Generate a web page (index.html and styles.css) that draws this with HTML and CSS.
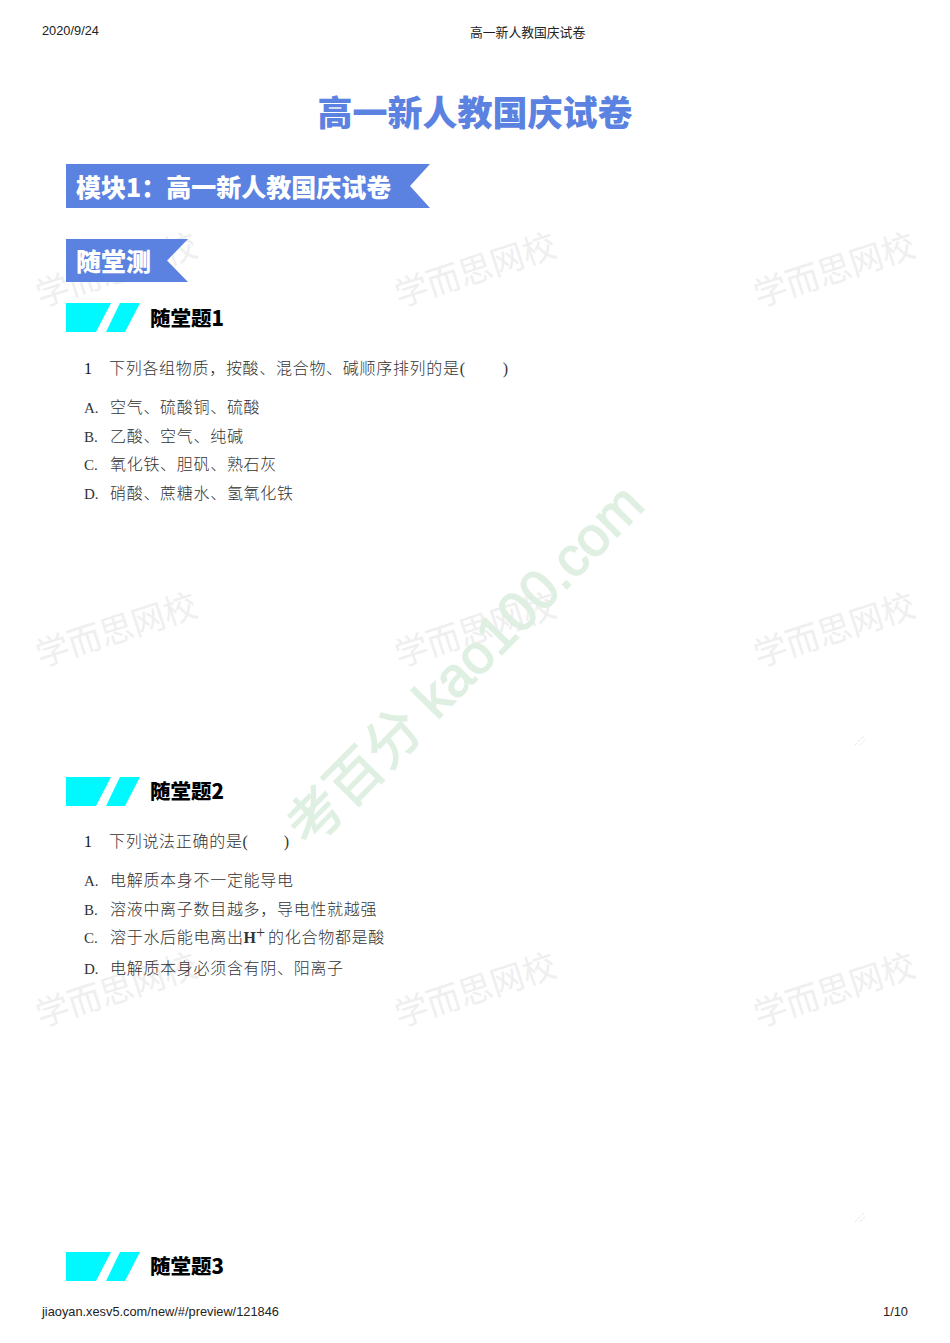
FILE: index.html
```html
<!DOCTYPE html>
<html lang="zh-CN">
<head>
<meta charset="utf-8">
<title>高一新人教国庆试卷</title>
<link rel="stylesheet" href="styles.css">
</head>
<body>
<div class="page">
  <div class="marks">
    <span>学而思网校</span><span>学而思网校</span><span>学而思网校</span>
    <span>学而思网校</span><span>学而思网校</span><span>学而思网校</span>
    <span>学而思网校</span><span>学而思网校</span><span>学而思网校</span>
  </div>
  <div class="stamp">考百分 kao100.com</div>
  <header class="top">
    <span class="date">2020/9/24</span>
    <span class="doc">高一新人教国庆试卷</span>
  </header>
  <main class="main">
    <h1 class="title">高一新人教国庆试卷</h1>
    <div class="ribbon ribbon-module">模块1&#xFF1A;高一新人教国庆试卷</div>
    <div class="ribbon ribbon-sub">随堂测</div>

    <section class="quiz">
      <h2 class="quiz-head">
        <svg class="slash" viewBox="0 0 75 29"><path d="M0 0H45L30 29H0Z"/><path d="M54 0H74L59 29H40Z"/></svg>
        随堂题1
      </h2>
      <p class="ask"><span class="n">1</span>下列各组物质&#xFF0C;按酸、混合物、碱顺序排列的是(<span class="blank"></span>)</p>
      <ol class="opts">
        <li><span class="k">A.</span>空气、硫酸铜、硫酸</li>
        <li><span class="k">B.</span>乙酸、空气、纯碱</li>
        <li><span class="k">C.</span>氧化铁、胆矾、熟石灰</li>
        <li><span class="k">D.</span>硝酸、蔗糖水、氢氧化铁</li>
      </ol>
      <svg class="grip grip-a" viewBox="0 0 10 10"><path d="M0 10L10 0M5 10L10 5"/></svg>
    </section>

    <section class="quiz">
      <h2 class="quiz-head">
        <svg class="slash" viewBox="0 0 75 29"><path d="M0 0H45L30 29H0Z"/><path d="M54 0H74L59 29H40Z"/></svg>
        随堂题2
      </h2>
      <p class="ask"><span class="n">1</span>下列说法正确的是(<span class="blank blank-b"></span>)</p>
      <ol class="opts">
        <li><span class="k">A.</span>电解质本身不一定能导电</li>
        <li><span class="k">B.</span>溶液中离子数目越多&#xFF0C;导电性就越强</li>
        <li class="tall"><span class="k">C.</span>溶于水后能电离出<b class="chem">H<sup>+</sup></b>的化合物都是酸</li>
        <li><span class="k">D.</span>电解质本身必须含有阴、阳离子</li>
      </ol>
      <svg class="grip grip-b" viewBox="0 0 10 10"><path d="M0 10L10 0M5 10L10 5"/></svg>
    </section>

    <section class="quiz">
      <h2 class="quiz-head">
        <svg class="slash" viewBox="0 0 75 29"><path d="M0 0H45L30 29H0Z"/><path d="M54 0H74L59 29H40Z"/></svg>
        随堂题3
      </h2>
    </section>
  </main>
  <footer class="bottom">
    <span>jiaoyan.xesv5.com/new/#/preview/121846</span>
    <span>1/10</span>
  </footer>
</div>
</body>
</html>
```
FILE: styles.css
```css
* { box-sizing: border-box; }
html, body { margin: 0; padding: 0; background: #fff; }
body { font-family: "Liberation Sans", "Noto Sans CJK SC", sans-serif; color: #111; }

.page {
  position: relative;
  width: 950px;
  height: 1343px;
  overflow: hidden;
  display: flex;
  flex-direction: column;
  padding-top: 24px;
}

/* watermarks */
.marks {
  position: absolute;
  left: -64px;
  top: 88px;
  display: grid;
  grid-template-columns: repeat(3, 359px);
  grid-auto-rows: 360px;
  place-items: center;
}
.marks span {
  font-family: "Noto Sans CJK SC", sans-serif;
  font-weight: 400;
  font-size: 33.5px;
  line-height: 40px;
  color: #efefef;
  white-space: nowrap;
  transform: rotate(-18deg);
}
.stamp {
  position: absolute;
  left: 465px;
  top: 665px;
  transform: translate(-50%, -50%) rotate(-45.5deg);
  font-family: "Liberation Sans", "Noto Sans CJK SC", sans-serif;
  font-size: 55px;
  line-height: 70px;
  color: #dff0e3;
  -webkit-text-stroke: 1.4px #dff0e3;
  white-space: nowrap;
}

/* running header and footer */
.top, .bottom {
  position: relative;
  display: flex;
  padding: 0 42px;
  font-size: 12.8px;
  color: #222;
}
.top { align-items: flex-start; height: 16px; }
.date { line-height: 14px; width: 428px; }
.doc { line-height: 18px; }
.bottom {
  justify-content: space-between;
  margin-top: auto;
  margin-bottom: 24px;
  line-height: 14px;
}

.main {
  position: relative;
  display: flex;
  flex-direction: column;
  padding: 0 66px;
}

.title {
  margin: 49px 0 0;
  text-align: center;
  font-family: "Noto Sans CJK SC", sans-serif;
  font-size: 35px;
  font-weight: 900;
  line-height: 44px;
  color: #5b82e0;
}

.ribbon {
  background: #5b82e0;
  color: #fff;
  font-family: "Noto Sans CJK SC", sans-serif;
  font-weight: 900;
  padding-left: 10px;
  white-space: nowrap;
}
.ribbon-module {
  width: 364px;
  height: 44px;
  margin-top: 31px;
  font-size: 25px;
  line-height: 44px;
  clip-path: polygon(0 0, 100% 0, 344px 50%, 100% 100%, 0 100%);
}
.ribbon-sub {
  width: 122px;
  height: 43px;
  margin-top: 31px;
  font-size: 25px;
  line-height: 43px;
  clip-path: polygon(0 0, 100% 0, 101px 50%, 100% 100%, 0 100%);
}

.quiz { display: flex; flex-direction: column; }

.quiz-head {
  display: flex;
  align-items: center;
  height: 29px;
  padding-bottom: 2px;
  margin: 21px 0 0;
  font-family: "Noto Sans CJK SC", sans-serif;
  font-size: 20.5px;
  font-weight: 900;
  color: #000;
}
.quiz + .quiz .quiz-head { margin-top: 0; height: 28px; }
.slash { width: 75px; height: 29px; margin-right: 9px; fill: #00f8ff; flex: none; align-self: flex-start; }

.ask, .opts {
  font-family: "Liberation Serif", "Noto Sans CJK SC", serif;
  font-weight: 300;
  font-size: 16px;
  letter-spacing: 0.7px;
  color: #333;
}
.ask {
  display: flex;
  margin: 25px 0 0 18px;
  line-height: 24px;
}
.n { width: 25px; color: #111; }
.blank { width: 37px; }
.blank-b { width: 35px; }

.opts { list-style: none; margin: 13px 0 0 18px; padding: 0; }
.opts li { display: flex; height: 28.7px; line-height: 28.7px; white-space: pre; }
.opts li.tall { height: 30.25px; }
.k { width: 26px; letter-spacing: 0; font-size: 15px; }
.chem { font-family: "Liberation Serif", serif; font-weight: 700; font-size: 16px; letter-spacing: 0; padding-right: 3px; }
.chem sup { font-size: 16px; font-weight: 400; line-height: 0; vertical-align: 5px; }

.grip {
  width: 10px;
  height: 10px;
  align-self: flex-end;
  margin-right: 19px;
  fill: none;
  stroke: #c8c8c8;
  stroke-width: 0.7;
  stroke-dasharray: 1 1;
}
.grip-a { margin-top: 226.2px; margin-bottom: 32px; }
.grip-b { margin-top: 228.65px; margin-bottom: 30px; }
```
